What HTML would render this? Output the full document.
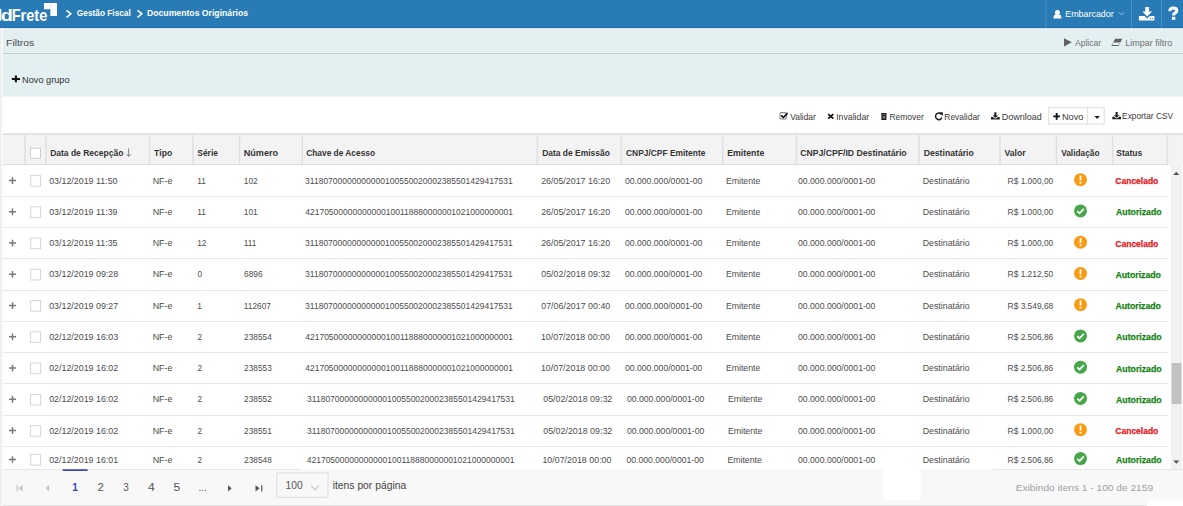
<!DOCTYPE html><html><head><meta charset="utf-8"><style>html,body{margin:0;padding:0;width:1183px;height:506px;overflow:hidden;background:#fff}svg{display:block;font-family:"Liberation Sans",sans-serif}text{white-space:pre}</style></head><body><svg width="1183" height="506" viewBox="0 0 1183 506"><rect x="0" y="0" width="1183" height="28" fill="#297bb5"/>
<rect x="0" y="26.6" width="1183" height="1.6" fill="#2672ab"/>
<rect x="1045.5" y="0" width="1" height="28" fill="#4a90c5"/>
<rect x="1131.0" y="0" width="1" height="28" fill="#4a90c5"/>
<rect x="1161.0" y="0" width="1" height="28" fill="#4a90c5"/>
<path d="M44 3 H57 V16 H50.6 V9.3 H44 Z" fill="#fff"/>
<rect x="50.3" y="3" width="0.6" height="13" fill="#cfe0ee"/><rect x="50.6" y="9.1" width="6.4" height="0.5" fill="#dbe8f2"/>
<path d="M66.5 10.3 L70.9 13.8 L66.5 17.3" stroke="#fff" stroke-width="1.5" fill="none"/>
<path d="M137.5 10.3 L141.9 13.8 L137.5 17.3" stroke="#fff" stroke-width="1.5" fill="none"/>
<circle cx="1057.4" cy="12.4" r="2.5" fill="#fff"/>
<path d="M1053.5 18.5 V17 Q1053.5 14.6 1056 14.6 H1058.8 Q1061.3 14.6 1061.3 17 V18.5 Z" fill="#fff"/>
<path d="M1119.2 12.4 L1121.5 14.9 L1123.8 12.4" stroke="#a9c9e3" stroke-width="0.9" fill="none"/>
<path d="M1145.3 6.9 H1149.1 V11.5 H1152 L1147.2 16.6 L1142.4 11.5 H1145.3 Z" fill="#fff"/>
<path d="M1138.9 16.0 H1144.6 L1147.2 18.4 L1149.8 16.0 H1154.4 V20.5 H1138.9 Z" fill="#fff"/>
<rect x="1149.8" y="18.1" width="1.1" height="1" fill="#297bb5"/><rect x="1151.8" y="18.1" width="1.1" height="1" fill="#297bb5"/>
<text x="11.73" y="20.70" font-size="16.2" fill="#fff" font-weight="bold" textLength="35.57" lengthAdjust="spacingAndGlyphs">Frete</text>
<text x="0.79" y="20.70" font-size="16.2" fill="#fff" font-weight="bold" textLength="12.12" lengthAdjust="spacingAndGlyphs">d</text>
<rect x="-1" y="8.9" width="2.3" height="11.8" fill="#fff"/>
<text x="76.86" y="16.40" font-size="9.4" fill="#fff" font-weight="bold" textLength="53.93" lengthAdjust="spacingAndGlyphs">Gestão Fiscal</text>
<text x="147.02" y="16.40" font-size="9.4" fill="#fff" font-weight="bold" textLength="101.04" lengthAdjust="spacingAndGlyphs">Documentos Originários</text>
<text x="1065.27" y="16.90" font-size="9.6" fill="#fff" textLength="48.48" lengthAdjust="spacingAndGlyphs">Embarcador</text>
<path d="M1169.9 11.2 Q1169.7 8.1 1173.4 8.0 Q1176.8 8.0 1176.8 10.4 Q1176.8 12.0 1175.1 12.9 Q1173.6 13.7 1173.6 15.6" stroke="#fff" stroke-width="3.1" fill="none"/>
<rect x="1171.9" y="16.8" width="3.4" height="3.0" fill="#fff"/>
<rect x="0" y="28" width="1183" height="1" fill="#d9e3e8"/>
<rect x="3" y="29" width="1180" height="67.5" fill="#e4eff1"/>
<rect x="3" y="53" width="1180" height="1" fill="#c6ccd0"/>
<text x="6.05" y="45.90" font-size="9.4" fill="#4a4a4a" textLength="28.23" lengthAdjust="spacingAndGlyphs">Filtros</text>
<path d="M1064 38.2 L1071.8 42.3 L1064 46.4 Z" fill="#606060"/>
<text x="1074.98" y="45.70" font-size="9.3" fill="#707070" textLength="26.16" lengthAdjust="spacingAndGlyphs">Aplicar</text>
<path d="M1115.2 38.7 H1122.3 L1118.4 46 H1111.3 Z" fill="#606060"/>
<path d="M1113.2 42.6 H1120.3 L1118.3 45.1 H1112.4 Z" fill="#e5eff2"/>
<text x="1125.16" y="45.70" font-size="9.3" fill="#707070" textLength="47.12" lengthAdjust="spacingAndGlyphs">Limpar filtro</text>
<path d="M11.8 79 H20 M15.9 75.6 V82.3" stroke="#111" stroke-width="2.1"/>
<text x="22.04" y="82.80" font-size="9.4" fill="#333" textLength="47.54" lengthAdjust="spacingAndGlyphs">Novo grupo</text>
<rect x="780" y="112.6" width="6.3" height="6.4" rx="1.3" stroke="#8a8a8a" stroke-width="1.1" fill="none"/>
<path d="M781.3 115.4 L783.3 117.6 L787.6 113.1" stroke="#111" stroke-width="1.6" fill="none"/>
<text x="790.26" y="119.60" font-size="9.6" fill="#3a3a3a" textLength="25.58" lengthAdjust="spacingAndGlyphs">Validar</text>
<path d="M828.2 114.1 L833.3 118.7 M833.3 114.1 L828.2 118.7" stroke="#111" stroke-width="1.7"/>
<text x="836.20" y="119.60" font-size="9.6" fill="#3a3a3a" textLength="32.95" lengthAdjust="spacingAndGlyphs">Invalidar</text>
<rect x="881.1" y="113.1" width="5.6" height="1.5" fill="#1a1a1a"/>
<rect x="882.05" y="115.15" width="3.7" height="4.2" stroke="#1a1a1a" stroke-width="1.3" fill="#777"/>
<text x="889.51" y="119.60" font-size="9.6" fill="#3a3a3a" textLength="34.23" lengthAdjust="spacingAndGlyphs">Remover</text>
<path d="M941.3 114.2 A3.3 3.3 0 1 0 941.9 117.6" stroke="#1a1a1a" stroke-width="1.45" fill="none"/>
<path d="M939.2 112.5 L942.9 112.3 L942.7 116 Z" fill="#1a1a1a"/>
<text x="944.31" y="119.60" font-size="9.6" fill="#3a3a3a" textLength="35.63" lengthAdjust="spacingAndGlyphs">Revalidar</text>
<path d="M994.3 112.2 H996.4 V115.5 H998.2 L995.35 118.0 L992.5 115.5 H994.3 Z" fill="#222"/><path d="M991.0 117.0 H992.9 L994.6 118.5 H996.1 L997.8 117.0 H999.7 V119.60000000000001 H991.0 Z" fill="#222"/>
<text x="1001.66" y="119.60" font-size="9.6" fill="#3a3a3a" textLength="40.02" lengthAdjust="spacingAndGlyphs">Download</text>
<rect x="1048.7" y="107.8" width="55.5" height="16.2" fill="#fff" stroke="#dcdcdc" stroke-width="1"/>
<rect x="1087" y="108" width="1" height="16" fill="#e2e2e2"/>
<path d="M1053.3 116.4 H1060 M1056.65 113 V119.7" stroke="#111" stroke-width="1.9"/>
<text x="1061.95" y="120.00" font-size="9.6" fill="#3a3a3a" textLength="21.44" lengthAdjust="spacingAndGlyphs">Novo</text>
<path d="M1094.4 116 H1099.9 L1097.15 118.9 Z" fill="#222"/>
<path d="M1115.6 111.9 H1117.7 V115.2 H1119.5 L1116.6499999999999 117.7 L1113.8 115.2 H1115.6 Z" fill="#222"/><path d="M1112.3 116.7 H1114.2 L1115.8999999999999 118.2 H1117.3999999999999 L1119.1 116.7 H1121.0 V119.30000000000001 H1112.3 Z" fill="#222"/>
<text x="1122.12" y="119.30" font-size="9.6" fill="#3a3a3a" textLength="50.92" lengthAdjust="spacingAndGlyphs">Exportar CSV</text>
<rect x="3" y="133" width="1180" height="32" fill="#f3f3f3"/>
<rect x="3" y="133" width="1180" height="2" fill="#e3e3e3"/>
<rect x="3" y="164" width="1165" height="1" fill="#dcdcdc"/>
<rect x="24.25" y="135" width="1.5" height="29" fill="#e0e0e0"/>
<rect x="45.25" y="135" width="1.5" height="29" fill="#e0e0e0"/>
<rect x="148.75" y="135" width="1.5" height="29" fill="#e0e0e0"/>
<rect x="192.15" y="135" width="1.5" height="29" fill="#e0e0e0"/>
<rect x="238.85" y="135" width="1.5" height="29" fill="#e0e0e0"/>
<rect x="301.55" y="135" width="1.5" height="29" fill="#e0e0e0"/>
<rect x="536.65" y="135" width="1.5" height="29" fill="#e0e0e0"/>
<rect x="620.55" y="135" width="1.5" height="29" fill="#e0e0e0"/>
<rect x="721.95" y="135" width="1.5" height="29" fill="#e0e0e0"/>
<rect x="795.65" y="135" width="1.5" height="29" fill="#e0e0e0"/>
<rect x="918.25" y="135" width="1.5" height="29" fill="#e0e0e0"/>
<rect x="999.25" y="135" width="1.5" height="29" fill="#e0e0e0"/>
<rect x="1055.75" y="135" width="1.5" height="29" fill="#e0e0e0"/>
<rect x="1111.85" y="135" width="1.5" height="29" fill="#e0e0e0"/>
<rect x="1166.55" y="135" width="1.5" height="29" fill="#e0e0e0"/>
<rect x="30.5" y="148.3" width="10" height="10" fill="#fff" stroke="#cfcfcf" stroke-width="1"/>
<text x="50.13" y="155.60" font-size="9.2" fill="#333" font-weight="bold" textLength="73.20" lengthAdjust="spacingAndGlyphs">Data de Recepção</text>
<text x="154.10" y="155.60" font-size="9.2" fill="#333" font-weight="bold" textLength="18.14" lengthAdjust="spacingAndGlyphs">Tipo</text>
<text x="197.36" y="155.60" font-size="9.2" fill="#333" font-weight="bold" textLength="20.53" lengthAdjust="spacingAndGlyphs">Série</text>
<text x="243.69" y="155.60" font-size="9.2" fill="#333" font-weight="bold" textLength="34.36" lengthAdjust="spacingAndGlyphs">Número</text>
<text x="306.26" y="155.60" font-size="9.2" fill="#333" font-weight="bold" textLength="68.77" lengthAdjust="spacingAndGlyphs">Chave de Acesso</text>
<text x="542.23" y="155.60" font-size="9.2" fill="#333" font-weight="bold" textLength="67.60" lengthAdjust="spacingAndGlyphs">Data de Emissão</text>
<text x="626.06" y="155.60" font-size="9.2" fill="#333" font-weight="bold" textLength="79.33" lengthAdjust="spacingAndGlyphs">CNPJ/CPF Emitente</text>
<text x="727.21" y="155.60" font-size="9.2" fill="#333" font-weight="bold" textLength="37.09" lengthAdjust="spacingAndGlyphs">Emitente</text>
<text x="800.14" y="155.60" font-size="9.2" fill="#333" font-weight="bold" textLength="106.50" lengthAdjust="spacingAndGlyphs">CNPJ/CPF/ID Destinatário</text>
<text x="923.72" y="155.60" font-size="9.2" fill="#333" font-weight="bold" textLength="50.12" lengthAdjust="spacingAndGlyphs">Destinatário</text>
<text x="1004.54" y="155.60" font-size="9.2" fill="#333" font-weight="bold" textLength="20.99" lengthAdjust="spacingAndGlyphs">Valor</text>
<text x="1061.14" y="155.60" font-size="9.2" fill="#333" font-weight="bold" textLength="38.38" lengthAdjust="spacingAndGlyphs">Validação</text>
<text x="1116.36" y="155.60" font-size="9.2" fill="#333" font-weight="bold" textLength="25.89" lengthAdjust="spacingAndGlyphs">Status</text>
<path d="M128.6 148.4 V156.3 M126.3 154 L128.6 156.4 L130.9 154" stroke="#777" stroke-width="0.9" fill="none"/>
<rect x="3" y="196" width="1165" height="1" fill="#e6e6e6"/>
<path d="M9 180.60 H16 M12.5 177.30 V183.90" stroke="#7a7a7a" stroke-width="1.5"/>
<rect x="30.6" y="175.60" width="10" height="10.6" fill="#fff" stroke="#d6d6d6" stroke-width="1"/>
<text x="49.15" y="183.70" font-size="9.7" fill="#4d4d4d" textLength="68.39" lengthAdjust="spacingAndGlyphs">03/12/2019 11:50</text>
<text x="152.67" y="183.70" font-size="9.7" fill="#4d4d4d" textLength="19.83" lengthAdjust="spacingAndGlyphs">NF-e</text>
<text x="197.17" y="183.70" font-size="9.7" fill="#4d4d4d" textLength="8.62" lengthAdjust="spacingAndGlyphs">11</text>
<text x="243.87" y="183.70" font-size="9.7" fill="#4d4d4d" textLength="13.85" lengthAdjust="spacingAndGlyphs">102</text>
<text x="305.08" y="183.70" font-size="9.7" fill="#4d4d4d" textLength="207.74" lengthAdjust="spacingAndGlyphs">31180700000000000100550020002385501429417531</text>
<text x="541.15" y="183.70" font-size="9.7" fill="#4d4d4d" textLength="69.05" lengthAdjust="spacingAndGlyphs">26/05/2017 16:20</text>
<text x="624.96" y="183.70" font-size="9.7" fill="#4d4d4d" textLength="77.38" lengthAdjust="spacingAndGlyphs">00.000.000/0001-00</text>
<text x="725.88" y="183.70" font-size="9.7" fill="#4d4d4d" textLength="34.51" lengthAdjust="spacingAndGlyphs">Emitente</text>
<text x="798.06" y="183.70" font-size="9.7" fill="#4d4d4d" textLength="77.38" lengthAdjust="spacingAndGlyphs">00.000.000/0001-00</text>
<text x="922.68" y="183.70" font-size="9.7" fill="#4d4d4d" textLength="46.99" lengthAdjust="spacingAndGlyphs">Destinatário</text>
<text x="1007.61" y="183.70" font-size="9.7" fill="#4d4d4d" textLength="45.61" lengthAdjust="spacingAndGlyphs">R$ 1.000,00</text>
<circle cx="1080.5" cy="179.70" r="6.5" fill="#f89b12"/>
<rect x="1079.6" y="175.50" width="1.8" height="5" fill="#fff"/>
<rect x="1079.6" y="181.80" width="1.8" height="1.8" fill="#fff"/>
<text x="1115.35" y="184.10" font-size="9.4" fill="#e8141c" font-weight="bold" stroke="#e8141c" stroke-width="0.25" textLength="42.98" lengthAdjust="spacingAndGlyphs">Cancelado</text>
<rect x="3" y="227" width="1165" height="1" fill="#e6e6e6"/>
<path d="M9 211.85 H16 M12.5 208.55 V215.15" stroke="#7a7a7a" stroke-width="1.5"/>
<rect x="30.6" y="206.85" width="10" height="10.6" fill="#fff" stroke="#d6d6d6" stroke-width="1"/>
<text x="49.15" y="214.95" font-size="9.7" fill="#4d4d4d" textLength="68.39" lengthAdjust="spacingAndGlyphs">03/12/2019 11:39</text>
<text x="152.67" y="214.95" font-size="9.7" fill="#4d4d4d" textLength="19.83" lengthAdjust="spacingAndGlyphs">NF-e</text>
<text x="197.17" y="214.95" font-size="9.7" fill="#4d4d4d" textLength="8.62" lengthAdjust="spacingAndGlyphs">11</text>
<text x="243.87" y="214.95" font-size="9.7" fill="#4d4d4d" textLength="13.85" lengthAdjust="spacingAndGlyphs">101</text>
<text x="305.20" y="214.95" font-size="9.7" fill="#4d4d4d" textLength="207.74" lengthAdjust="spacingAndGlyphs">42170500000000000100118880000001021000000001</text>
<text x="541.15" y="214.95" font-size="9.7" fill="#4d4d4d" textLength="69.05" lengthAdjust="spacingAndGlyphs">26/05/2017 16:20</text>
<text x="624.96" y="214.95" font-size="9.7" fill="#4d4d4d" textLength="77.38" lengthAdjust="spacingAndGlyphs">00.000.000/0001-00</text>
<text x="725.88" y="214.95" font-size="9.7" fill="#4d4d4d" textLength="34.51" lengthAdjust="spacingAndGlyphs">Emitente</text>
<text x="798.06" y="214.95" font-size="9.7" fill="#4d4d4d" textLength="77.38" lengthAdjust="spacingAndGlyphs">00.000.000/0001-00</text>
<text x="922.68" y="214.95" font-size="9.7" fill="#4d4d4d" textLength="46.99" lengthAdjust="spacingAndGlyphs">Destinatário</text>
<text x="1007.61" y="214.95" font-size="9.7" fill="#4d4d4d" textLength="45.61" lengthAdjust="spacingAndGlyphs">R$ 1.000,00</text>
<circle cx="1080.5" cy="210.95" r="6.5" fill="#47a64a"/>
<path d="M1077.3 211.15 L1079.6 213.35 L1083.8 208.85" stroke="#fff" stroke-width="1.7" fill="none"/>
<text x="1116.08" y="215.35" font-size="9.4" fill="#138313" font-weight="bold" stroke="#138313" stroke-width="0.25" textLength="45.46" lengthAdjust="spacingAndGlyphs">Autorizado</text>
<rect x="3" y="258" width="1165" height="1" fill="#e6e6e6"/>
<path d="M9 243.10 H16 M12.5 239.80 V246.40" stroke="#7a7a7a" stroke-width="1.5"/>
<rect x="30.6" y="238.10" width="10" height="10.6" fill="#fff" stroke="#d6d6d6" stroke-width="1"/>
<text x="49.15" y="246.20" font-size="9.7" fill="#4d4d4d" textLength="68.39" lengthAdjust="spacingAndGlyphs">03/12/2019 11:35</text>
<text x="152.67" y="246.20" font-size="9.7" fill="#4d4d4d" textLength="19.83" lengthAdjust="spacingAndGlyphs">NF-e</text>
<text x="197.17" y="246.20" font-size="9.7" fill="#4d4d4d" textLength="9.23" lengthAdjust="spacingAndGlyphs">12</text>
<text x="243.87" y="246.20" font-size="9.7" fill="#4d4d4d" textLength="12.62" lengthAdjust="spacingAndGlyphs">111</text>
<text x="305.08" y="246.20" font-size="9.7" fill="#4d4d4d" textLength="207.74" lengthAdjust="spacingAndGlyphs">31180700000000000100550020002385501429417531</text>
<text x="541.15" y="246.20" font-size="9.7" fill="#4d4d4d" textLength="69.05" lengthAdjust="spacingAndGlyphs">26/05/2017 16:20</text>
<text x="624.96" y="246.20" font-size="9.7" fill="#4d4d4d" textLength="77.38" lengthAdjust="spacingAndGlyphs">00.000.000/0001-00</text>
<text x="725.88" y="246.20" font-size="9.7" fill="#4d4d4d" textLength="34.51" lengthAdjust="spacingAndGlyphs">Emitente</text>
<text x="798.06" y="246.20" font-size="9.7" fill="#4d4d4d" textLength="77.38" lengthAdjust="spacingAndGlyphs">00.000.000/0001-00</text>
<text x="922.68" y="246.20" font-size="9.7" fill="#4d4d4d" textLength="46.99" lengthAdjust="spacingAndGlyphs">Destinatário</text>
<text x="1007.61" y="246.20" font-size="9.7" fill="#4d4d4d" textLength="45.61" lengthAdjust="spacingAndGlyphs">R$ 1.000,00</text>
<circle cx="1080.5" cy="242.20" r="6.5" fill="#f89b12"/>
<rect x="1079.6" y="238.00" width="1.8" height="5" fill="#fff"/>
<rect x="1079.6" y="244.30" width="1.8" height="1.8" fill="#fff"/>
<text x="1115.35" y="246.60" font-size="9.4" fill="#e8141c" font-weight="bold" stroke="#e8141c" stroke-width="0.25" textLength="42.98" lengthAdjust="spacingAndGlyphs">Cancelado</text>
<rect x="3" y="290" width="1165" height="1" fill="#e6e6e6"/>
<path d="M9 274.35 H16 M12.5 271.05 V277.65" stroke="#7a7a7a" stroke-width="1.5"/>
<rect x="30.6" y="269.35" width="10" height="10.6" fill="#fff" stroke="#d6d6d6" stroke-width="1"/>
<text x="49.15" y="277.45" font-size="9.7" fill="#4d4d4d" textLength="69.05" lengthAdjust="spacingAndGlyphs">03/12/2019 09:28</text>
<text x="152.67" y="277.45" font-size="9.7" fill="#4d4d4d" textLength="19.83" lengthAdjust="spacingAndGlyphs">NF-e</text>
<text x="197.48" y="277.45" font-size="9.7" fill="#4d4d4d" textLength="4.62" lengthAdjust="spacingAndGlyphs">0</text>
<text x="244.08" y="277.45" font-size="9.7" fill="#4d4d4d" textLength="18.47" lengthAdjust="spacingAndGlyphs">6896</text>
<text x="305.08" y="277.45" font-size="9.7" fill="#4d4d4d" textLength="207.74" lengthAdjust="spacingAndGlyphs">31180700000000000100550020002385501429417531</text>
<text x="541.25" y="277.45" font-size="9.7" fill="#4d4d4d" textLength="69.05" lengthAdjust="spacingAndGlyphs">05/02/2018 09:32</text>
<text x="624.96" y="277.45" font-size="9.7" fill="#4d4d4d" textLength="77.38" lengthAdjust="spacingAndGlyphs">00.000.000/0001-00</text>
<text x="725.88" y="277.45" font-size="9.7" fill="#4d4d4d" textLength="34.51" lengthAdjust="spacingAndGlyphs">Emitente</text>
<text x="798.06" y="277.45" font-size="9.7" fill="#4d4d4d" textLength="77.38" lengthAdjust="spacingAndGlyphs">00.000.000/0001-00</text>
<text x="922.68" y="277.45" font-size="9.7" fill="#4d4d4d" textLength="46.99" lengthAdjust="spacingAndGlyphs">Destinatário</text>
<text x="1007.61" y="277.45" font-size="9.7" fill="#4d4d4d" textLength="45.61" lengthAdjust="spacingAndGlyphs">R$ 1.212,50</text>
<circle cx="1080.5" cy="273.45" r="6.5" fill="#f89b12"/>
<rect x="1079.6" y="269.25" width="1.8" height="5" fill="#fff"/>
<rect x="1079.6" y="275.55" width="1.8" height="1.8" fill="#fff"/>
<text x="1115.48" y="277.85" font-size="9.4" fill="#138313" font-weight="bold" stroke="#138313" stroke-width="0.25" textLength="45.46" lengthAdjust="spacingAndGlyphs">Autorizado</text>
<rect x="3" y="321" width="1165" height="1" fill="#e6e6e6"/>
<path d="M9 305.60 H16 M12.5 302.30 V308.90" stroke="#7a7a7a" stroke-width="1.5"/>
<rect x="30.6" y="300.60" width="10" height="10.6" fill="#fff" stroke="#d6d6d6" stroke-width="1"/>
<text x="49.15" y="308.70" font-size="9.7" fill="#4d4d4d" textLength="69.05" lengthAdjust="spacingAndGlyphs">03/12/2019 09:27</text>
<text x="152.67" y="308.70" font-size="9.7" fill="#4d4d4d" textLength="19.83" lengthAdjust="spacingAndGlyphs">NF-e</text>
<text x="197.17" y="308.70" font-size="9.7" fill="#4d4d4d" textLength="4.62" lengthAdjust="spacingAndGlyphs">1</text>
<text x="243.87" y="308.70" font-size="9.7" fill="#4d4d4d" textLength="27.07" lengthAdjust="spacingAndGlyphs">112607</text>
<text x="305.08" y="308.70" font-size="9.7" fill="#4d4d4d" textLength="207.74" lengthAdjust="spacingAndGlyphs">31180700000000000100550020002385501429417531</text>
<text x="541.25" y="308.70" font-size="9.7" fill="#4d4d4d" textLength="69.05" lengthAdjust="spacingAndGlyphs">07/06/2017 00:40</text>
<text x="624.96" y="308.70" font-size="9.7" fill="#4d4d4d" textLength="77.38" lengthAdjust="spacingAndGlyphs">00.000.000/0001-00</text>
<text x="725.88" y="308.70" font-size="9.7" fill="#4d4d4d" textLength="34.51" lengthAdjust="spacingAndGlyphs">Emitente</text>
<text x="798.06" y="308.70" font-size="9.7" fill="#4d4d4d" textLength="77.38" lengthAdjust="spacingAndGlyphs">00.000.000/0001-00</text>
<text x="922.68" y="308.70" font-size="9.7" fill="#4d4d4d" textLength="46.99" lengthAdjust="spacingAndGlyphs">Destinatário</text>
<text x="1007.61" y="308.70" font-size="9.7" fill="#4d4d4d" textLength="45.61" lengthAdjust="spacingAndGlyphs">R$ 3.549,68</text>
<circle cx="1080.5" cy="304.70" r="6.5" fill="#f89b12"/>
<rect x="1079.6" y="300.50" width="1.8" height="5" fill="#fff"/>
<rect x="1079.6" y="306.80" width="1.8" height="1.8" fill="#fff"/>
<text x="1115.48" y="309.10" font-size="9.4" fill="#138313" font-weight="bold" stroke="#138313" stroke-width="0.25" textLength="45.46" lengthAdjust="spacingAndGlyphs">Autorizado</text>
<rect x="3" y="352" width="1165" height="1" fill="#e6e6e6"/>
<path d="M9 336.85 H16 M12.5 333.55 V340.15" stroke="#7a7a7a" stroke-width="1.5"/>
<rect x="30.6" y="331.85" width="10" height="10.6" fill="#fff" stroke="#d6d6d6" stroke-width="1"/>
<text x="49.15" y="339.95" font-size="9.7" fill="#4d4d4d" textLength="69.05" lengthAdjust="spacingAndGlyphs">02/12/2019 16:03</text>
<text x="152.67" y="339.95" font-size="9.7" fill="#4d4d4d" textLength="19.83" lengthAdjust="spacingAndGlyphs">NF-e</text>
<text x="197.38" y="339.95" font-size="9.7" fill="#4d4d4d" textLength="4.62" lengthAdjust="spacingAndGlyphs">2</text>
<text x="244.08" y="339.95" font-size="9.7" fill="#4d4d4d" textLength="27.69" lengthAdjust="spacingAndGlyphs">238554</text>
<text x="305.20" y="339.95" font-size="9.7" fill="#4d4d4d" textLength="207.74" lengthAdjust="spacingAndGlyphs">42170500000000000100118880000001021000000001</text>
<text x="540.92" y="339.95" font-size="9.7" fill="#4d4d4d" textLength="69.05" lengthAdjust="spacingAndGlyphs">10/07/2018 00:00</text>
<text x="624.96" y="339.95" font-size="9.7" fill="#4d4d4d" textLength="77.38" lengthAdjust="spacingAndGlyphs">00.000.000/0001-00</text>
<text x="725.88" y="339.95" font-size="9.7" fill="#4d4d4d" textLength="34.51" lengthAdjust="spacingAndGlyphs">Emitente</text>
<text x="798.06" y="339.95" font-size="9.7" fill="#4d4d4d" textLength="77.38" lengthAdjust="spacingAndGlyphs">00.000.000/0001-00</text>
<text x="922.68" y="339.95" font-size="9.7" fill="#4d4d4d" textLength="46.99" lengthAdjust="spacingAndGlyphs">Destinatário</text>
<text x="1007.61" y="339.95" font-size="9.7" fill="#4d4d4d" textLength="45.61" lengthAdjust="spacingAndGlyphs">R$ 2.506,86</text>
<circle cx="1080.5" cy="335.95" r="6.5" fill="#47a64a"/>
<path d="M1077.3 336.15 L1079.6 338.35 L1083.8 333.85" stroke="#fff" stroke-width="1.7" fill="none"/>
<text x="1116.08" y="340.35" font-size="9.4" fill="#138313" font-weight="bold" stroke="#138313" stroke-width="0.25" textLength="45.46" lengthAdjust="spacingAndGlyphs">Autorizado</text>
<rect x="3" y="383" width="1165" height="1" fill="#e6e6e6"/>
<path d="M9 368.10 H16 M12.5 364.80 V371.40" stroke="#7a7a7a" stroke-width="1.5"/>
<rect x="30.6" y="363.10" width="10" height="10.6" fill="#fff" stroke="#d6d6d6" stroke-width="1"/>
<text x="49.15" y="371.20" font-size="9.7" fill="#4d4d4d" textLength="69.05" lengthAdjust="spacingAndGlyphs">02/12/2019 16:02</text>
<text x="152.67" y="371.20" font-size="9.7" fill="#4d4d4d" textLength="19.83" lengthAdjust="spacingAndGlyphs">NF-e</text>
<text x="197.38" y="371.20" font-size="9.7" fill="#4d4d4d" textLength="4.62" lengthAdjust="spacingAndGlyphs">2</text>
<text x="244.08" y="371.20" font-size="9.7" fill="#4d4d4d" textLength="27.69" lengthAdjust="spacingAndGlyphs">238553</text>
<text x="305.20" y="371.20" font-size="9.7" fill="#4d4d4d" textLength="207.74" lengthAdjust="spacingAndGlyphs">42170500000000000100118880000001021000000001</text>
<text x="540.92" y="371.20" font-size="9.7" fill="#4d4d4d" textLength="69.05" lengthAdjust="spacingAndGlyphs">10/07/2018 00:00</text>
<text x="624.96" y="371.20" font-size="9.7" fill="#4d4d4d" textLength="77.38" lengthAdjust="spacingAndGlyphs">00.000.000/0001-00</text>
<text x="725.88" y="371.20" font-size="9.7" fill="#4d4d4d" textLength="34.51" lengthAdjust="spacingAndGlyphs">Emitente</text>
<text x="798.06" y="371.20" font-size="9.7" fill="#4d4d4d" textLength="77.38" lengthAdjust="spacingAndGlyphs">00.000.000/0001-00</text>
<text x="922.68" y="371.20" font-size="9.7" fill="#4d4d4d" textLength="46.99" lengthAdjust="spacingAndGlyphs">Destinatário</text>
<text x="1007.61" y="371.20" font-size="9.7" fill="#4d4d4d" textLength="45.61" lengthAdjust="spacingAndGlyphs">R$ 2.506,86</text>
<circle cx="1080.5" cy="367.20" r="6.5" fill="#47a64a"/>
<path d="M1077.3 367.40 L1079.6 369.60 L1083.8 365.10" stroke="#fff" stroke-width="1.7" fill="none"/>
<text x="1116.08" y="371.60" font-size="9.4" fill="#138313" font-weight="bold" stroke="#138313" stroke-width="0.25" textLength="45.46" lengthAdjust="spacingAndGlyphs">Autorizado</text>
<rect x="3" y="415" width="1165" height="1" fill="#e6e6e6"/>
<path d="M9 399.35 H16 M12.5 396.05 V402.65" stroke="#7a7a7a" stroke-width="1.5"/>
<rect x="30.6" y="394.35" width="10" height="10.6" fill="#fff" stroke="#d6d6d6" stroke-width="1"/>
<text x="49.15" y="402.45" font-size="9.7" fill="#4d4d4d" textLength="69.05" lengthAdjust="spacingAndGlyphs">02/12/2019 16:02</text>
<text x="152.67" y="402.45" font-size="9.7" fill="#4d4d4d" textLength="19.83" lengthAdjust="spacingAndGlyphs">NF-e</text>
<text x="197.38" y="402.45" font-size="9.7" fill="#4d4d4d" textLength="4.62" lengthAdjust="spacingAndGlyphs">2</text>
<text x="244.08" y="402.45" font-size="9.7" fill="#4d4d4d" textLength="27.69" lengthAdjust="spacingAndGlyphs">238552</text>
<text x="307.08" y="402.45" font-size="9.7" fill="#4d4d4d" textLength="207.74" lengthAdjust="spacingAndGlyphs">31180700000000000100550020002385501429417531</text>
<text x="543.25" y="402.45" font-size="9.7" fill="#4d4d4d" textLength="69.05" lengthAdjust="spacingAndGlyphs">05/02/2018 09:32</text>
<text x="626.96" y="402.45" font-size="9.7" fill="#4d4d4d" textLength="77.38" lengthAdjust="spacingAndGlyphs">00.000.000/0001-00</text>
<text x="727.88" y="402.45" font-size="9.7" fill="#4d4d4d" textLength="34.51" lengthAdjust="spacingAndGlyphs">Emitente</text>
<text x="798.06" y="402.45" font-size="9.7" fill="#4d4d4d" textLength="77.38" lengthAdjust="spacingAndGlyphs">00.000.000/0001-00</text>
<text x="922.68" y="402.45" font-size="9.7" fill="#4d4d4d" textLength="46.99" lengthAdjust="spacingAndGlyphs">Destinatário</text>
<text x="1007.61" y="402.45" font-size="9.7" fill="#4d4d4d" textLength="45.61" lengthAdjust="spacingAndGlyphs">R$ 2.506,86</text>
<circle cx="1080.5" cy="398.45" r="6.5" fill="#47a64a"/>
<path d="M1077.3 398.65 L1079.6 400.85 L1083.8 396.35" stroke="#fff" stroke-width="1.7" fill="none"/>
<text x="1116.08" y="402.85" font-size="9.4" fill="#138313" font-weight="bold" stroke="#138313" stroke-width="0.25" textLength="45.46" lengthAdjust="spacingAndGlyphs">Autorizado</text>
<rect x="3" y="446" width="1165" height="1" fill="#e6e6e6"/>
<path d="M9 430.60 H16 M12.5 427.30 V433.90" stroke="#7a7a7a" stroke-width="1.5"/>
<rect x="30.6" y="425.60" width="10" height="10.6" fill="#fff" stroke="#d6d6d6" stroke-width="1"/>
<text x="49.15" y="433.70" font-size="9.7" fill="#4d4d4d" textLength="69.05" lengthAdjust="spacingAndGlyphs">02/12/2019 16:02</text>
<text x="152.67" y="433.70" font-size="9.7" fill="#4d4d4d" textLength="19.83" lengthAdjust="spacingAndGlyphs">NF-e</text>
<text x="197.38" y="433.70" font-size="9.7" fill="#4d4d4d" textLength="4.62" lengthAdjust="spacingAndGlyphs">2</text>
<text x="244.08" y="433.70" font-size="9.7" fill="#4d4d4d" textLength="27.69" lengthAdjust="spacingAndGlyphs">238551</text>
<text x="307.08" y="433.70" font-size="9.7" fill="#4d4d4d" textLength="207.74" lengthAdjust="spacingAndGlyphs">31180700000000000100550020002385501429417531</text>
<text x="543.25" y="433.70" font-size="9.7" fill="#4d4d4d" textLength="69.05" lengthAdjust="spacingAndGlyphs">05/02/2018 09:32</text>
<text x="626.96" y="433.70" font-size="9.7" fill="#4d4d4d" textLength="77.38" lengthAdjust="spacingAndGlyphs">00.000.000/0001-00</text>
<text x="727.88" y="433.70" font-size="9.7" fill="#4d4d4d" textLength="34.51" lengthAdjust="spacingAndGlyphs">Emitente</text>
<text x="798.06" y="433.70" font-size="9.7" fill="#4d4d4d" textLength="77.38" lengthAdjust="spacingAndGlyphs">00.000.000/0001-00</text>
<text x="922.68" y="433.70" font-size="9.7" fill="#4d4d4d" textLength="46.99" lengthAdjust="spacingAndGlyphs">Destinatário</text>
<text x="1007.61" y="433.70" font-size="9.7" fill="#4d4d4d" textLength="45.61" lengthAdjust="spacingAndGlyphs">R$ 1.000,00</text>
<circle cx="1080.5" cy="429.70" r="6.5" fill="#f89b12"/>
<rect x="1079.6" y="425.50" width="1.8" height="5" fill="#fff"/>
<rect x="1079.6" y="431.80" width="1.8" height="1.8" fill="#fff"/>
<text x="1115.35" y="434.10" font-size="9.4" fill="#e8141c" font-weight="bold" stroke="#e8141c" stroke-width="0.25" textLength="42.98" lengthAdjust="spacingAndGlyphs">Cancelado</text>
<rect x="3" y="477" width="1165" height="1" fill="#e6e6e6"/>
<path d="M9 459.45 H16 M12.5 456.15 V462.75" stroke="#7a7a7a" stroke-width="1.5"/>
<rect x="30.6" y="454.45" width="10" height="10.6" fill="#fff" stroke="#d6d6d6" stroke-width="1"/>
<text x="49.15" y="462.55" font-size="9.7" fill="#4d4d4d" textLength="69.05" lengthAdjust="spacingAndGlyphs">02/12/2019 16:01</text>
<text x="152.67" y="462.55" font-size="9.7" fill="#4d4d4d" textLength="19.83" lengthAdjust="spacingAndGlyphs">NF-e</text>
<text x="197.38" y="462.55" font-size="9.7" fill="#4d4d4d" textLength="4.62" lengthAdjust="spacingAndGlyphs">2</text>
<text x="244.08" y="462.55" font-size="9.7" fill="#4d4d4d" textLength="27.69" lengthAdjust="spacingAndGlyphs">238548</text>
<text x="306.70" y="462.55" font-size="9.7" fill="#4d4d4d" textLength="207.74" lengthAdjust="spacingAndGlyphs">42170500000000000100118880000001021000000001</text>
<text x="542.42" y="462.55" font-size="9.7" fill="#4d4d4d" textLength="69.05" lengthAdjust="spacingAndGlyphs">10/07/2018 00:00</text>
<text x="626.46" y="462.55" font-size="9.7" fill="#4d4d4d" textLength="77.38" lengthAdjust="spacingAndGlyphs">00.000.000/0001-00</text>
<text x="727.38" y="462.55" font-size="9.7" fill="#4d4d4d" textLength="34.51" lengthAdjust="spacingAndGlyphs">Emitente</text>
<text x="798.06" y="462.55" font-size="9.7" fill="#4d4d4d" textLength="77.38" lengthAdjust="spacingAndGlyphs">00.000.000/0001-00</text>
<text x="922.68" y="462.55" font-size="9.7" fill="#4d4d4d" textLength="46.99" lengthAdjust="spacingAndGlyphs">Destinatário</text>
<text x="1007.61" y="462.55" font-size="9.7" fill="#4d4d4d" textLength="45.61" lengthAdjust="spacingAndGlyphs">R$ 2.506,86</text>
<circle cx="1080.5" cy="458.55" r="6.5" fill="#47a64a"/>
<path d="M1077.3 458.75 L1079.6 460.95 L1083.8 456.45" stroke="#fff" stroke-width="1.7" fill="none"/>
<text x="1116.08" y="462.95" font-size="9.4" fill="#138313" font-weight="bold" stroke="#138313" stroke-width="0.25" textLength="45.46" lengthAdjust="spacingAndGlyphs">Autorizado</text>
<rect x="1171" y="165" width="11" height="304" fill="#f1f1f1"/>
<rect x="1171.5" y="363" width="10" height="41" fill="#c1c1c1"/>
<path d="M1173.3 175 H1179.3 L1176.3 171.8 Z" fill="#505050"/>
<path d="M1173.3 460.5 H1179.3 L1176.3 463.7 Z" fill="#505050"/>
<rect x="3" y="469" width="1180" height="36" fill="#f8f8f8"/>
<rect x="3" y="469" width="297" height="1" fill="#e6e6e6"/>
<rect x="993" y="469" width="190" height="1" fill="#e6e6e6"/>
<rect x="3" y="505" width="1144" height="1" fill="#e3e3e3"/>
<rect x="883.2" y="469" width="37.5" height="31" fill="#fff"/>
<rect x="1147" y="500.4" width="36" height="6" fill="#fff"/>
<rect x="62.7" y="469.2" width="24.9" height="1.8" fill="#3f51b5"/>
<rect x="16.6" y="485" width="1.2" height="6.6" fill="#c4c4c4"/><path d="M22.5 485 V491.6 L18.6 488.3 Z" fill="#c4c4c4"/>
<path d="M49.1 485 V491.6 L45.6 488.3 Z" fill="#c4c4c4"/>
<path d="M228 485.3 V491.4 L231.7 488.35 Z" fill="#555"/>
<path d="M255.5 485.3 V491.4 L259.6 488.35 Z" fill="#555"/><rect x="261.2" y="485.3" width="1.2" height="6.1" fill="#555"/>
<text x="72.16" y="491.00" font-size="10.5" fill="#3547b0" font-weight="bold" textLength="5.62" lengthAdjust="spacingAndGlyphs">1</text>
<text x="97.43" y="491.20" font-size="10.5" fill="#555" textLength="6.35" lengthAdjust="spacingAndGlyphs">2</text>
<text x="123.32" y="491.20" font-size="10.5" fill="#555" textLength="5.51" lengthAdjust="spacingAndGlyphs">3</text>
<text x="148.12" y="491.20" font-size="10.5" fill="#555" textLength="6.73" lengthAdjust="spacingAndGlyphs">4</text>
<text x="173.62" y="491.20" font-size="10.5" fill="#555" textLength="6.69" lengthAdjust="spacingAndGlyphs">5</text>
<text x="198.48" y="490.50" font-size="10.0" fill="#555" textLength="8.45" lengthAdjust="spacingAndGlyphs">...</text>
<rect x="276.8" y="473" width="51.2" height="24.3" fill="#f8f8f8" stroke="#dcdcdc" stroke-width="1"/>
<text x="285.62" y="489.00" font-size="10.5" fill="#555" textLength="17.08" lengthAdjust="spacingAndGlyphs">100</text>
<path d="M311.2 485.6 L315.05 489.6 L318.9 485.6" stroke="#c4c4c4" stroke-width="1.1" fill="none"/>
<text x="332.71" y="489.00" font-size="10.5" fill="#444" textLength="73.49" lengthAdjust="spacingAndGlyphs">itens por página</text>
<text x="1015.76" y="490.90" font-size="9.9" fill="#a0a0a0" textLength="137.32" lengthAdjust="spacingAndGlyphs">Exibindo itens 1 - 100 de 2159</text>
<rect x="0" y="28" width="1" height="478" fill="#ececec"/>
<rect x="1" y="28" width="2" height="478" fill="#f7f7f7"/></svg></body></html>
